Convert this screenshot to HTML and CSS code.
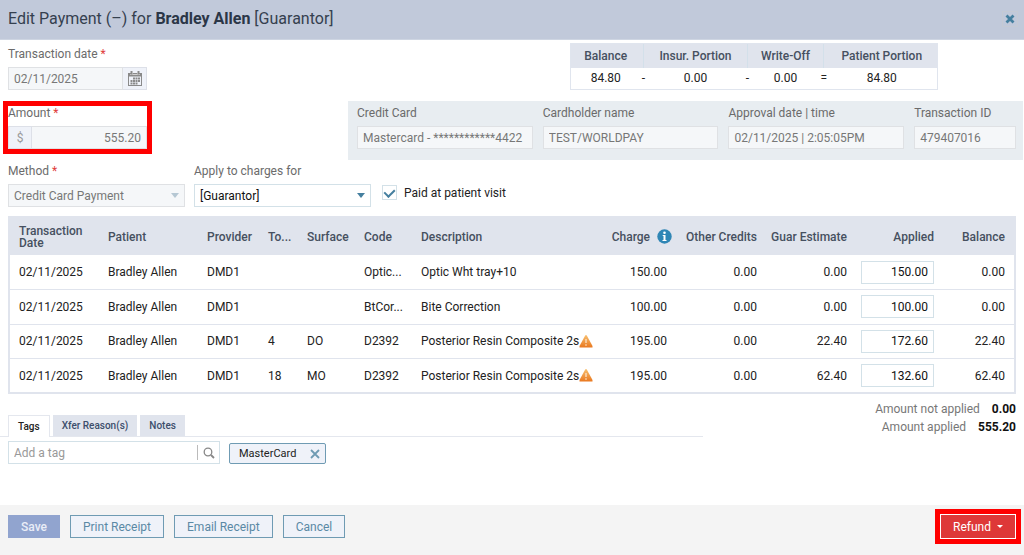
FILE: index.html
```html
<!DOCTYPE html>
<html lang="en">
<head>
  <meta charset="UTF-8" />
  <meta name="viewport" content="width=device-width, initial-scale=1.0"/>
  <title>Edit Payment</title>
  <link rel="stylesheet" href="styles.css">
</head>
<body>

<form class="dialog">
  <header class="dialog-header">
    <h1>Edit Payment (–) for <strong>Bradley Allen</strong> [Guarantor]</h1>
    <button type="button" class="close-btn" aria-label="Close">
      <svg width="10" height="10" viewBox="0 0 10 10"><path d="M1.5 1.5l7 7M8.5 1.5l-7 7" stroke="#457f9f" stroke-width="2.8"/></svg>
    </button>
  </header>

  <main class="dialog-body">
    <div class="row row-top">
      <div class="field small-field">
        <label for="date">Transaction date <span class="required">*</span></label>
        <div class="input-group">
          <input type="text" id="date" value="02/11/2025" disabled />
          <button type="button" class="addon" aria-label="Pick a date" disabled>
            <svg width="14" height="16" viewBox="0 0 14 16" fill="#8a8a8a">
              <path d="M0 2h14v13H0zM1 5.500V14h12V5.500z" fill-rule="evenodd"/>
              <path d="M2 3h2V1.500h1V3h4V1.500h1V3h2v1H2z" fill="#fff" opacity=".6"/>
              <path d="M2.500 0h2v3.500h-2zM9.500 0h2v3.500h-2z"/>
              <path d="M5 6.500h2v2H5zM7.500 6.500h2v2h-2zM10 6.500h2v2h-2zM2.500 9h2v2h-2zM5 9h2v2H5zM7.500 9h2v2h-2zM10 9h2v2h-2zM2.500 11.500h2v2h-2zM5 11.500h2v2H5zM7.500 11.500h2v2h-2z"/>
            </svg>
          </button>
        </div>
      </div>

      <table class="summary">
        <thead>
          <tr>
            <th class="w-balance">Balance</th>
            <th class="op"></th>
            <th class="w-insur">Insur. Portion</th>
            <th class="op"></th>
            <th class="w-write">Write-Off</th>
            <th class="op"></th>
            <th>Patient Portion</th>
          </tr>
        </thead>
        <tbody>
          <tr>
            <td>84.80</td>
            <td class="op">-</td>
            <td>0.00</td>
            <td class="op">-</td>
            <td>0.00</td>
            <td class="op">=</td>
            <td>84.80</td>
          </tr>
        </tbody>
      </table>
    </div>

    <div class="row row-amount">
      <div class="field small-field amount highlight">
        <label for="amount">Amount <span class="required">*</span></label>
        <div class="input-group">
          <span class="addon">$</span>
          <input type="text" id="amount" class="number" value="555.20" disabled />
        </div>
      </div>

      <div class="card-info">
        <div class="field">
          <label for="card">Credit Card</label>
          <input type="text" id="card" value="Mastercard - ************4422" disabled />
        </div>
        <div class="field">
          <label for="holder">Cardholder name</label>
          <input type="text" id="holder" value="TEST/WORLDPAY" disabled />
        </div>
        <div class="field">
          <label for="approval">Approval date | time</label>
          <input type="text" id="approval" value="02/11/2025 | 2:05:05PM" disabled />
        </div>
        <div class="field">
          <label for="transaction">Transaction ID</label>
          <input type="text" id="transaction" value="479407016" disabled />
        </div>
      </div>
    </div>

    <div class="row row-method">
      <div class="field select-field">
        <label for="method">Method <span class="required">*</span></label>
        <div class="select-wrap disabled">
          <select id="method" disabled><option>Credit Card Payment</option></select>
        </div>
      </div>
      <div class="field select-field">
        <label for="applyTo">Apply to charges for</label>
        <div class="select-wrap">
          <select id="applyTo"><option>[Guarantor]</option></select>
        </div>
      </div>
      <div class="checkbox-label">
        <input type="checkbox" id="paidAtVisit" checked />
        <label for="paidAtVisit">Paid at patient visit</label>
      </div>
    </div>

    <table class="charges">
      <colgroup>
        <col class="c-date"><col class="c-patient"><col class="c-provider"><col class="c-tooth">
        <col class="c-code"><col class="c-code"><col><col class="c-money">
        <col class="c-money"><col class="c-money"><col class="c-applied"><col class="c-balance">
      </colgroup>
      <thead>
        <tr>
          <th>Transaction Date</th>
          <th>Patient</th>
          <th>Provider</th>
          <th>To...</th>
          <th>Surface</th>
          <th>Code</th>
          <th>Description</th>
          <th class="number charge">
            <span>Charge
              <svg width="15" height="15" viewBox="0 0 15 15"><circle cx="7.500" cy="7.500" r="7.200" fill="#2f86b5"/><circle cx="7.500" cy="3.700" r="1.300" fill="#fff"/><path d="M5.700 6h2.800v5h1v1h-4v-1h1V7h-.800z" fill="#fff"/></svg>
            </span>
          </th>
          <th class="number">Other Credits</th>
          <th class="number">Guar Estimate</th>
          <th class="number applied">Applied</th>
          <th class="number">Balance</th>
        </tr>
      </thead>
      <tbody>
        <tr>
          <td>02/11/2025</td>
          <td>Bradley Allen</td>
          <td>DMD1</td>
          <td></td>
          <td></td>
          <td>Optic...</td>
          <td>Optic Wht tray+10</td>
          <td class="number">150.00</td>
          <td class="number">0.00</td>
          <td class="number">0.00</td>
          <td class="applied"><input type="text" class="number" aria-label="Applied" value="150.00" /></td>
          <td class="number">0.00</td>
        </tr>
        <tr>
          <td>02/11/2025</td>
          <td>Bradley Allen</td>
          <td>DMD1</td>
          <td></td>
          <td></td>
          <td>BtCor...</td>
          <td>Bite Correction</td>
          <td class="number">100.00</td>
          <td class="number">0.00</td>
          <td class="number">0.00</td>
          <td class="applied"><input type="text" class="number" aria-label="Applied" value="100.00" /></td>
          <td class="number">0.00</td>
        </tr>
        <tr>
          <td>02/11/2025</td>
          <td>Bradley Allen</td>
          <td>DMD1</td>
          <td>4</td>
          <td>DO</td>
          <td>D2392</td>
          <td>
            <span class="warn">Posterior Resin Composite 2s<svg width="14" height="13" viewBox="0 0 14 13"><defs><linearGradient id="warnFill" x2="0" y2="1"><stop offset="0" stop-color="#f8c070"/><stop offset="1" stop-color="#e9781f"/></linearGradient></defs><path d="M7 0l.8.500L13.500 11v1.500H.5V11L6.200.5z" fill="url(#warnFill)"/><path d="M7 4v4M7 9.300v1.400" stroke="#fbe3c8" stroke-width="1.300"/></svg></span>
          </td>
          <td class="number">195.00</td>
          <td class="number">0.00</td>
          <td class="number">22.40</td>
          <td class="applied"><input type="text" class="number" aria-label="Applied" value="172.60" /></td>
          <td class="number">22.40</td>
        </tr>
        <tr>
          <td>02/11/2025</td>
          <td>Bradley Allen</td>
          <td>DMD1</td>
          <td>18</td>
          <td>MO</td>
          <td>D2392</td>
          <td>
            <span class="warn">Posterior Resin Composite 2s<svg width="14" height="13" viewBox="0 0 14 13"><path d="M7 0l.8.500L13.500 11v1.500H.5V11L6.200.5z" fill="url(#warnFill)"/><path d="M7 4v4M7 9.300v1.400" stroke="#fbe3c8" stroke-width="1.300"/></svg></span>
          </td>
          <td class="number">195.00</td>
          <td class="number">0.00</td>
          <td class="number">62.40</td>
          <td class="applied"><input type="text" class="number" aria-label="Applied" value="132.60" /></td>
          <td class="number">62.40</td>
        </tr>
      </tbody>
    </table>

    <div class="bottom">
      <section class="extras">
        <div class="tabs">
          <button type="button" class="tab active">Tags</button>
          <button type="button" class="tab">Xfer Reason(s)</button>
          <button type="button" class="tab">Notes</button>
        </div>
        <div class="tag-row">
          <div class="tag-search">
            <input type="text" placeholder="Add a tag" aria-label="Add a tag" />
            <button type="button" aria-label="Search tags">
              <svg width="12" height="12" viewBox="0 0 12 12" fill="none" stroke="#888"><circle cx="5" cy="5" r="3.800" stroke-width="1.300"/><path d="M8 8l3 3" stroke-width="1.800"/></svg>
            </button>
          </div>
          <span class="tag">MasterCard
            <button type="button" aria-label="Remove MasterCard">
              <svg width="10" height="10" viewBox="0 0 10 10"><path d="M1 1l8 8M9 1L1 9" stroke="#6f9bb3" stroke-width="1.800"/></svg>
            </button>
          </span>
        </div>
      </section>

      <dl class="totals">
        <div><dt>Amount not applied</dt><dd>0.00</dd></div>
        <div><dt>Amount applied</dt><dd>555.20</dd></div>
      </dl>
    </div>
  </main>

  <footer class="dialog-footer">
    <button type="submit" class="btn btn-save" disabled>Save</button>
    <button type="button" class="btn">Print Receipt</button>
    <button type="button" class="btn">Email Receipt</button>
    <button type="button" class="btn">Cancel</button>
    <div class="refund highlight">
      <button type="button" class="btn btn-refund">Refund <span class="caret"></span></button>
    </div>
  </footer>
</form>

</body>
</html>
```

FILE: styles.css
```css
* { box-sizing: border-box; }
body, input, select, button {
  font-family: Roboto, "Liberation Sans", sans-serif; font-size: 12px; line-height: 14px;
}
body { margin: 0; color: #222; background-color: #fff; }
button { cursor: pointer; padding: 0; }
table { border-collapse: collapse; }
svg { display: block; flex: none; }

.dialog { display: flex; flex-direction: column; min-height: 100vh; }
.dialog-header {
  display: flex; align-items: center; justify-content: space-between;
  height: 40px; padding: 0 6px 2px 8px; background-color: #c1c9da; border-bottom: 1px solid #ced5e2;
}
.dialog-header h1 { margin: 0; font-size: 16px; line-height: 20px; font-weight: 400; color: #35404f; }
.dialog-header strong { font-weight: 700; color: #2b3647; }
.close-btn {
  display: flex; align-items: center; justify-content: center;
  width: 16px; height: 16px; border: 1px solid #c5cad4; background: none;
}

.dialog-body { padding: 3px 8px 0; }
.row { display: flex; align-items: flex-start; }

/* fields */
.field { display: flex; flex-direction: column; gap: 6px; }
.field label { color: #6b6b6b; }
.required { color: #e03c3c; }
.small-field { width: 139px; flex: none; }
input[type="text"], select {
  width: 100%; min-width: 0; height: 23px; padding: 0 5px; margin: 0;
  border: 1px solid #d3e1e8; background-color: #fff; color: #111; outline: none;
}
input[type="text"]:disabled, select:disabled {
  background-color: #f5f7f9; border-color: #dfe1e4; color: #777; opacity: 1;
}
.number { text-align: right; }
.input-group { display: flex; }
.addon {
  display: flex; align-items: center; justify-content: center; width: 24px; height: 23px; flex: none;
  border: 1px solid #dde0e8; background-color: #eff2f9; color: #999;
}
.input-group input + .addon { border-left: none; }
.input-group .addon + input[type="text"] { border-left: none; }
.highlight { outline: 5px solid #f00; }

.row-top { justify-content: space-between; }
.row-top .field { margin-top: 4px; }
.summary { width: 368px; margin-right: 78px; table-layout: fixed; border: 1px solid #e0e5ee; }
.summary th { height: 24px; padding: 0; background-color: #e0e4ed; font-weight: 500; color: #465060; white-space: nowrap; }
.summary td { height: 22px; padding: 0; text-align: center; }
.summary .op { width: 6px; }
.summary th.op { background: linear-gradient(90deg, #e0e4ed 2px, #d3e0ea 2px, #d3e0ea 3px, #e0e4ed 3px); }
.summary .w-balance { width: 70px; }
.summary .w-insur { width: 98px; }
.summary .w-write { width: 70px; }

.row-amount { gap: 201px; margin-top: 11px; margin-right: -7px; }
.amount { margin-top: 5px; }
.card-info {
  display: grid; grid-template-columns: 176fr 176fr 176fr 102fr; gap: 10px;
  flex: 1; padding: 5px 7px 11px 9px; background-color: #e8edf1;
}

.row-method { gap: 9px; margin-top: 4px; }
.select-field { width: 177px; }
.select-wrap { position: relative; }
.select-wrap select { appearance: none; display: block; }
.select-wrap::after {
  content: ""; position: absolute; right: 6px; top: 9px;
  border: 4px solid transparent; border-top: 5px solid #457f9f; border-bottom: 0; pointer-events: none;
}
.select-wrap.disabled::after { border-top-color: #b5c7d3; }
.checkbox-label { display: flex; align-items: center; gap: 7px; margin: 21px 0 0 2px; }
.checkbox-label input {
  appearance: none; display: flex; justify-content: center; width: 15px; height: 15px; margin: 0;
  border: 1px solid #d3e1e8; background-color: #fff;
}
.checkbox-label input:checked::before {
  content: ""; width: 5px; height: 8px; margin-top: 1px; transform: rotate(45deg);
  border: solid #457f9f; border-width: 0 2px 2px 0;
}

/* charges table */
.charges { width: 100%; height: 178px; margin-top: 9px; table-layout: fixed; border: 2px solid #e0e4ed; }
.charges th {
  height: 38px; padding: 0 0 0 9px; background-color: #e0e4ed; text-align: left;
  font-weight: 500; line-height: 12px; color: #465060;
}
.charges td { height: 34px; padding: 0 0 0 9px; border-bottom: 1px solid #e0e4ed; white-space: nowrap; }
.charges .number { padding: 0 9px 0 0; text-align: right; white-space: nowrap; }
.charges th.charge { padding-right: 4px; }
.charge span { display: flex; align-items: center; justify-content: flex-end; gap: 7px; }
.charges .applied { padding: 0 5px; }
.charges input.number { display: block; padding: 0 5px; }
.c-date { width: 90px; }
.c-patient { width: 99px; }
.c-provider { width: 61px; }
.c-tooth { width: 39px; }
.c-code { width: 57px; }
.c-money { width: 90px; }
.c-applied { width: 83px; }
.c-balance { width: 76px; }
.warn { display: flex; align-items: center; }

/* tags and totals */
.bottom { display: flex; justify-content: space-between; align-items: flex-start; }
.extras { width: 703px; margin: 21px 0 0 -8px; }
.tabs { display: flex; gap: 3px; padding-left: 8px; border-bottom: 1px solid #e4e7ee; }
.tab {
  height: 21px; padding: 0 9px; border: none; background-color: #e0e4ed;
  font-size: 10px; font-weight: 500; color: #3c4e6b;
}
.tab.active {
  height: 22px; margin-bottom: -1px; background-color: #fff; color: #222;
  border: 1px solid #e4e7ee; border-bottom: none;
}
.tag-row { display: flex; align-items: flex-end; gap: 9px; padding: 4px 0 0 8px; }
.tag-search { display: flex; align-items: center; width: 212px; border: 1px solid #d3e1e8; }
.tag-search input[type="text"] { height: 21px; border: none; }
.tag-search input::placeholder { color: #999; }
.tag-search button {
  display: flex; justify-content: center; align-items: center; width: 22px; height: 15px; flex: none;
  border: none; border-left: 1px solid #bbb; background: none;
}
.tag {
  display: flex; align-items: center; gap: 14px; height: 21px; padding: 0 5px 0 9px; font-size: 11px;
  border: 1px solid #6f9bb3; border-radius: 2px; background-color: #eff2f9;
}
.tag button { border: none; background: none; }
.totals { margin: 6px 0 0; color: #777; }
.totals div { display: flex; justify-content: flex-end; gap: 12px; line-height: 18px; }
.totals dd { margin: 0; font-weight: 700; color: #111; }

/* footer */
.dialog-footer {
  display: flex; gap: 10px; height: 50px; margin-top: auto; padding: 10px 8px 0; background-color: #f4f4f4;
}
.btn {
  height: 23px; padding: 0 12px; border: 1px solid #6f9bb3; background-color: #eff2f9; color: #5a89a5;
}
.btn-save { border-color: #91a4cf; background-color: #91a4cf; color: #e9edf7; font-weight: 500; }
.refund { height: 25px; margin: -1px 0 0 auto; border: 1px solid #fff; }
.btn-refund {
  display: flex; align-items: center; gap: 6px; padding: 0 11px;
  border-color: #de3838; background-color: #de3838; color: #fff;
}
.caret { border: 3px solid transparent; border-top-color: #fff; border-bottom: 0; }
```
